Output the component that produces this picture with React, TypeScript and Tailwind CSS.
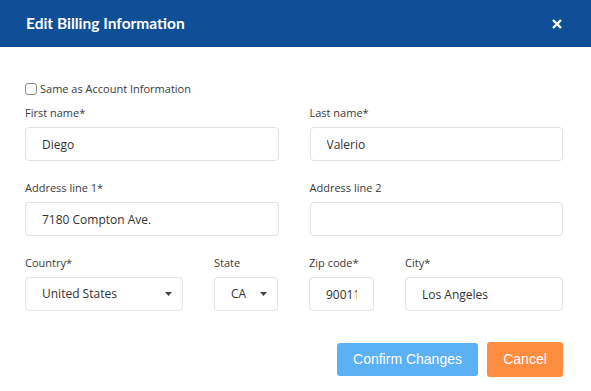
import React from "react";

const font = { fontFamily: '"Open Sans", "Liberation Sans", sans-serif' };

function Label({ children }: { children: React.ReactNode }) {
  return <div className="text-[11px] leading-4 text-[#3a3a3a] mb-[6px]">{children}</div>;
}

function TextField({ label, value, tight }: { label: string; value: string; tight?: boolean }) {
  return (
    <div className="min-w-0">
      <Label>{label}</Label>
      <input
        readOnly
        value={value}
        className={
          "w-full h-[34px] pl-[16px] rounded-[4px] border border-[#dde4e9] bg-white text-[12px] text-[#333] outline-none " +
          (tight ? "pr-[16px]" : "pr-[16px]")
        }
        style={font}
      />
    </div>
  );
}

function SelectField({ label, value }: { label: string; value: string }) {
  return (
    <div className="min-w-0">
      <Label>{label}</Label>
      <div className="h-[34px] pl-[16px] pr-[10px] rounded-[4px] border border-[#dde4e9] bg-white flex items-center justify-between text-[12px] text-[#333]">
        <span>{value}</span>
        <svg width="7" height="4" viewBox="0 0 7 4">
          <path d="M0 0h7L3.5 4z" fill="#444" />
        </svg>
      </div>
    </div>
  );
}

export default function App() {
  return (
    <div className="w-[591px] h-[391px] bg-white overflow-hidden" style={font}>
      <header className="h-[47px] bg-[#0e4f97] pl-[26px] pr-[26px] flex items-center justify-between">
        <h1 className="text-white font-bold text-[15.5px]" style={{ fontFamily: '"Lato", "Open Sans", sans-serif' }}>
          Edit Billing Information
        </h1>
        <svg width="10" height="10" viewBox="0 0 10 10" className="mr-[3px]">
          <path d="M1 1l8 8M9 1l-8 8" stroke="#fff" strokeWidth="2.4" />
        </svg>
      </header>

      <div className="pl-[25px] pr-[28px] pt-[34px]">
        <label className="flex items-center h-4 gap-[3px] text-[11px] text-[#3a3a3a]">
          <span className="w-[12px] h-[12px] rounded-[3px] border border-[#8a8a8a] bg-white" />
          Same as Account Information
        </label>

        <div className="mt-[8px] grid grid-cols-2 gap-x-[31px] gap-y-[19px]">
          <TextField label="First name*" value="Diego" />
          <TextField label="Last name*" value="Valerio" />
          <TextField label="Address line 1*" value="7180 Compton Ave." />
          <TextField label="Address line 2" value="" />
        </div>

        <div className="mt-[19px] grid grid-cols-[158px_64px_65px_1fr] gap-x-[31px]">
          <SelectField label="Country*" value="United States" />
          <SelectField label="State" value="CA" />
          <TextField label="Zip code*" value="90011" tight />
          <TextField label="City*" value="Los Angeles" />
        </div>

        <div
          className="mt-[31px] flex justify-end items-center gap-[9px]"
          style={{ fontFamily: '"Liberation Sans", Arial, sans-serif' }}
        >
          <button className="h-[33px] w-[141px] rounded-[3px] bg-[#5cb0f4] text-white text-[14px]">
            Confirm Changes
          </button>
          <button className="h-[35px] w-[76px] rounded-[3px] bg-[#ff8d3f] text-white text-[14px]">
            Cancel
          </button>
        </div>
      </div>
    </div>
  );
}
